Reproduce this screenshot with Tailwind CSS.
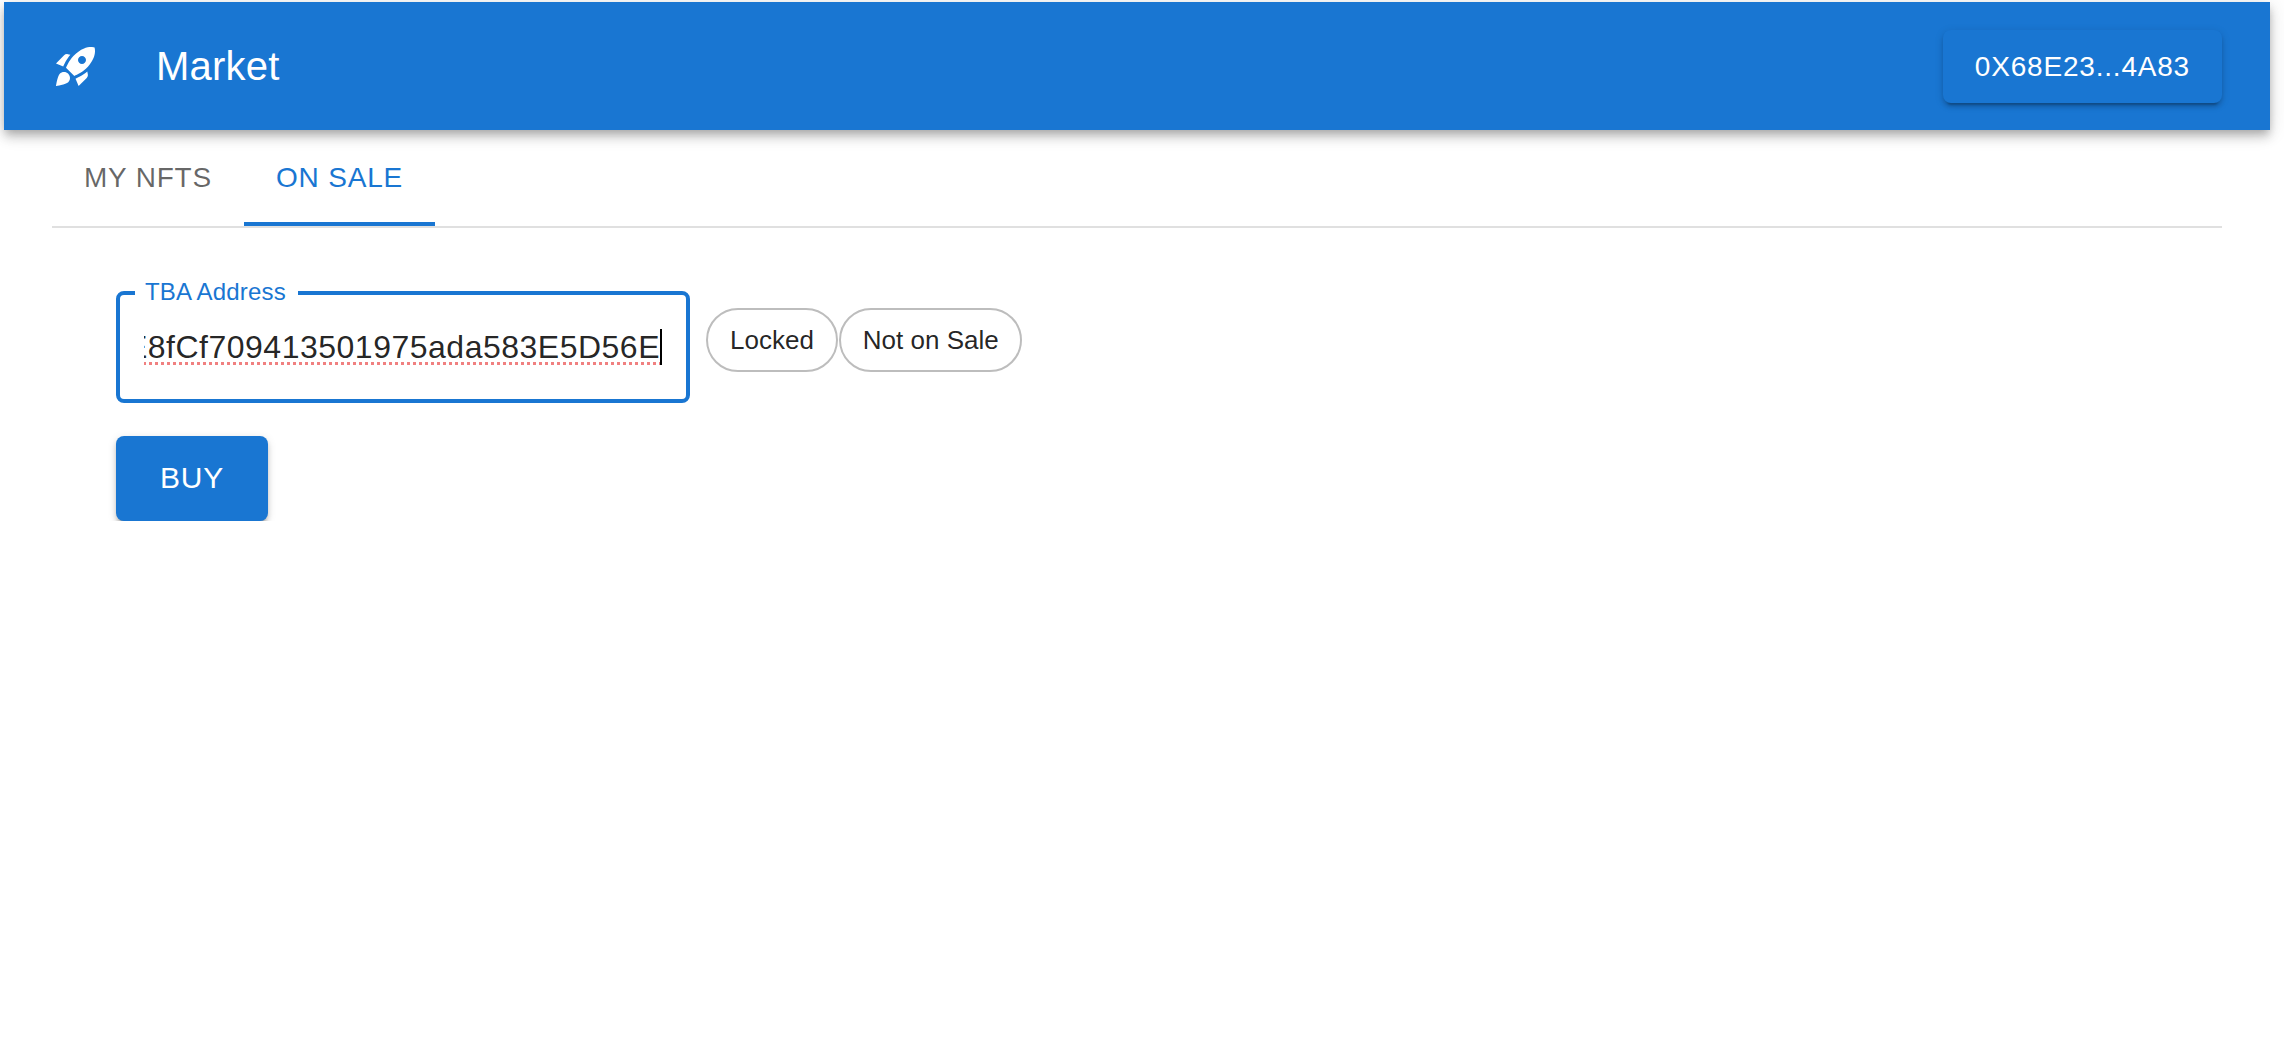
<!DOCTYPE html>
<html lang="en">
    <head>
        <meta charset="UTF-8" />
        <meta name="viewport" content="width=device-width, initial-scale=1.0" />
        <script src="https://cdn.jsdelivr.net/npm/@tailwindcss/browser@4"></script>
        <title>Market</title>
    </head>

    <body class="bg-white pt-[2px] font-['Liberation_Sans',Arial,sans-serif] text-black/87">
        <!-- app bar -->
        <header class="ml-[4px] mr-[14px] flex h-[128px] items-center bg-[#1976d2] pl-[48px] pr-[48px] text-white shadow-[0_4px_8px_-2px_rgba(0,0,0,0.2),0_8px_10px_0_rgba(0,0,0,0.14),0_2px_20px_0_rgba(0,0,0,0.12)]">
            <svg class="h-[48px] w-[48px] fill-white" viewBox="0 0 24 24">
                <path d="M9.19 6.35c-2.04 2.29-3.44 5.58-3.57 5.89L2 10.69l4.05-4.05c.47-.47 1.15-.68 1.81-.55l1.33.26zM11.17 17s3.74-1.55 5.89-3.7c5.4-5.4 4.5-9.62 4.21-10.57-.95-.3-5.17-1.19-10.57 4.21C8.55 9.09 7 12.83 7 12.83L11.17 17zm6.48-2.19c-2.29 2.04-5.58 3.44-5.89 3.57L13.31 22l4.05-4.05c.47-.47.68-1.15.55-1.81l-.26-1.33zM9 18c0 .83-.34 1.58-.88 2.12C6.94 21.3 2 22 2 22s.7-4.94 1.88-6.12C4.42 15.34 5.17 15 6 15c1.66 0 3 1.34 3 3zm4-9c0-1.1.9-2 2-2s2 .9 2 2-.9 2-2 2-2-.9-2-2z" />
            </svg>
            <h1 class="ml-[56px] grow text-[40px] leading-none tracking-[0.2px]">Market</h1>
            <button class="mt-[1px] h-[73px] rounded-[8px] bg-[#1976d2] px-[32px] text-[28px] tracking-[0.8px] shadow-[0_6px_2px_-4px_rgba(0,0,0,0.2),0_4px_4px_0_rgba(0,0,0,0.14),0_2px_10px_0_rgba(0,0,0,0.12)]">0X68E23...4A83</button>
        </header>

        <!-- tabs -->
        <nav class="ml-[52px] mr-[62px] flex h-[98px] border-b-2 border-[#e0e0e0] text-[28px] tracking-[0.8px]">
            <a class="flex h-[96px] w-[192px] items-center justify-center text-black/60">MY NFTS</a>
            <a class="flex h-[96px] w-[191px] items-center justify-center border-b-4 border-[#1976d2] pt-[4px] text-[#1976d2]">ON SALE</a>
        </nav>

        <main class="flex flex-col items-start gap-[33px] pl-[116px] pt-[63px]">
            <div class="flex items-start gap-[16px]">
                <div class="relative flex h-[112px] w-[574px] items-center rounded-[8px] border-4 border-[#1976d2] px-[24px]">
                    <label class="absolute left-[15px] top-[-17px] bg-white pl-[10px] pr-[12px] text-[24px] leading-[28px] tracking-[0.2px] text-[#1976d2]">TBA Address</label>
                    <div class="flex w-full justify-end overflow-hidden whitespace-nowrap text-[32px] leading-[36px] tracking-[0.5px]">
                        <span class="border-r-2 border-black underline decoration-dotted decoration-[#f08080] decoration-[3px] underline-offset-[4px] [text-decoration-skip-ink:none]">0E8fCf709413501975ada583E5D56E</span>
                    </div>
                </div>
                <div class="mt-[17px] flex gap-[1px] text-[26px] text-black/87">
                    <span class="flex h-[64px] items-center rounded-full border-2 border-[#bdbdbd] px-[22px]">Locked</span>
                    <span class="flex h-[64px] items-center rounded-full border-2 border-[#bdbdbd] pl-[22px] pr-[21px]">Not on Sale</span>
                </div>
            </div>
            <button class="h-[85px] rounded-[8px] bg-[#1976d2] px-[44px] pb-[2px] text-[30px] tracking-[0.8px] text-white shadow-[0_6px_4px_-4px_rgba(0,0,0,0.3),0_4px_5px_0_rgba(0,0,0,0.16),0_2px_10px_0_rgba(0,0,0,0.12)]">BUY</button>
        </main>
    </body>
</html>
